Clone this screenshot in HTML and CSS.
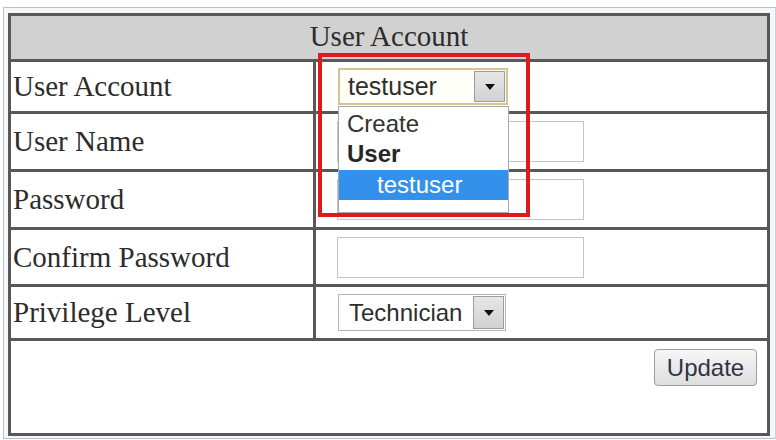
FILE: index.html
```html
<!DOCTYPE html>
<html>
<head>
<meta charset="utf-8">
<title>User Account</title>
<link rel="stylesheet" href="styles.css">
</head>
<body>
<div class="frame">
  <table class="acct">
    <colgroup><col class="c1"><col class="c2"></colgroup>
    <tr class="r0"><th colspan="2">User Account</th></tr>
    <tr class="r1">
      <td class="lbl">User Account</td>
      <td class="ctl">
        <div class="anchor">
          <div class="select focus"><span class="val">testuser</span><span class="arrow"><span class="tri"></span></span></div>
          <div class="popup">
            <div class="opt first">Create</div>
            <div class="grp">User</div>
            <div class="opt chosen">testuser</div>
          </div>
          <div class="redbox"></div>
        </div>
      </td>
    </tr>
    <tr class="r2">
      <td class="lbl">User Name</td>
      <td class="ctl"><input class="field" type="text"></td>
    </tr>
    <tr class="r3">
      <td class="lbl">Password</td>
      <td class="ctl"><input class="field" type="password"></td>
    </tr>
    <tr class="r4">
      <td class="lbl">Confirm Password</td>
      <td class="ctl"><input class="field" type="password"></td>
    </tr>
    <tr class="r5">
      <td class="lbl">Privilege Level</td>
      <td class="ctl"><div class="select priv"><span class="val">Technician</span><span class="arrow"><span class="tri"></span></span></div></td>
    </tr>
    <tr class="r6">
      <td class="foot" colspan="2"><button class="btn" type="button">Update</button></td>
    </tr>
  </table>
</div>
</body>
</html>
```

FILE: styles.css
```css
html, body {
  margin: 0;
  padding: 0;
  background: #ffffff;
}

.frame {
  margin: 7px 0 0 3px;
  width: 767px;
  padding: 5px 0 2px 4px;
  border: 1px solid #b3c2ce;
  border-right-color: #c9d3db;
  background: #f6f7f8;
}

.acct {
  width: 762px;
  table-layout: fixed;
  border-collapse: separate;
  border-spacing: 0;
  border: 3px solid #585858;
  background: #ffffff;
  font-family: "Liberation Serif", "Times New Roman", serif;
  font-size: 29px;
  color: #2c2c2c;
}

.c1 { width: 305px; }
.c2 { width: 451px; }

.acct th {
  font-weight: normal;
  background: #d1d1d1;
  text-align: center;
  padding: 0 0 3px 0;
  border-bottom: 3px solid #585858;
}

.acct td {
  padding: 0;
  border-bottom: 3px solid #585858;
  vertical-align: middle;
}

.r0 { height: 46px; }
.r1 { height: 52px; }
.r2 { height: 58px; }
.r3 { height: 58px; }
.r4 { height: 57px; }
.r5 { height: 54px; }
.r6 { height: 92px; }

.acct td.lbl {
  padding-left: 2px;
  border-right: 3px solid #585858;
  white-space: nowrap;
}

.acct td.ctl {
  padding-left: 21px;
}

.acct td.foot {
  border-bottom: 0;
  vertical-align: top;
  text-align: right;
  padding: 8px 10px 0 0;
}

/* select-like controls */
.anchor {
  position: relative;
  display: inline-block;
  vertical-align: middle;
}

.select {
  position: relative;
  box-sizing: border-box;
  display: flex;
  align-items: center;
  font-family: "Liberation Sans", Arial, sans-serif;
  font-size: 24px;
  color: #2e2e2e;
  background: #ffffff;
}

.select .val {
  flex: 1;
  padding-left: 8px;
  white-space: nowrap;
}

.select .arrow {
  box-sizing: border-box;
  display: flex;
  align-items: center;
  justify-content: center;
  width: 31px;
  align-self: stretch;
  margin: 1px 1px 1px 0;
  background: linear-gradient(#e6e6e6, #d2d2d2);
  border: 1px solid #9c9c9c;
}

.tri {
  width: 0;
  height: 0;
  border-left: 5px solid transparent;
  border-right: 5px solid transparent;
  border-top: 6px solid #111111;
}

.select.focus {
  width: 170px;
  height: 37px;
  margin-left: 1px;
  border: 2px solid #d6c48f;
  background: #fffef8;
  font-size: 25px;
}

.select.priv {
  width: 168px;
  height: 37px;
  margin-left: 1px;
  border: 1px solid #b4b4b4;
}

.select.priv .val {
  padding-left: 10px;
}

/* open dropdown list */
.popup {
  position: absolute;
  left: 1px;
  top: 38px;
  width: 171px;
  box-sizing: border-box;
  border: 1px solid #a9a9a9;
  padding: 3px 0 12px 0;
  background: #ffffff;
  font-family: "Liberation Sans", Arial, sans-serif;
  font-size: 24px;
  color: #333333;
  z-index: 2;
}

.popup .opt,
.popup .grp {
  padding-left: 8px;
  white-space: nowrap;
}

.popup .first { line-height: 28px; }

.popup .grp {
  font-weight: bold;
  line-height: 32px;
  color: #262626;
}

.popup .chosen {
  line-height: 30px;
  padding-left: 38px;
  background: #3391ec;
  color: #ffffff;
}

.redbox {
  position: absolute;
  left: -19px;
  top: -15px;
  width: 212px;
  height: 164px;
  box-sizing: border-box;
  border: 4px solid #df1a1a;
  z-index: 3;
  pointer-events: none;
}

/* text fields */
.field {
  box-sizing: border-box;
  display: block;
  width: 247px;
  height: 41px;
  margin: 0;
  border: 1px solid #c4c4c4;
  background: #ffffff;
  font-family: "Liberation Sans", Arial, sans-serif;
  font-size: 24px;
}

/* button */
.btn {
  box-sizing: border-box;
  width: 103px;
  height: 37px;
  padding: 0;
  border: 1px solid #9d9d9d;
  border-radius: 4px;
  background: linear-gradient(#f6f6f6, #dedede);
  font-family: "Liberation Sans", Arial, sans-serif;
  font-size: 24px;
  color: #333344;
}
```
